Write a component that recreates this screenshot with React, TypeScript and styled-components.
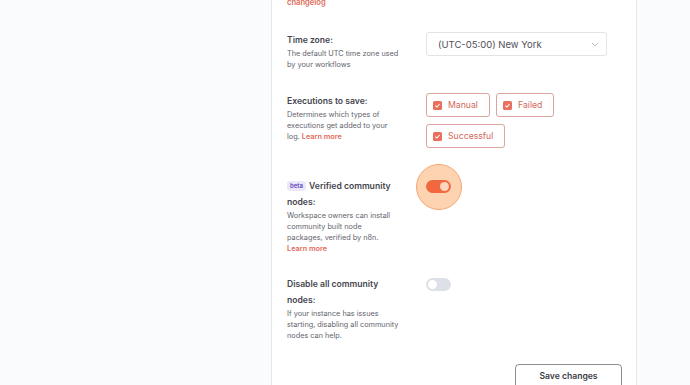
import React from "react";
import styled, { createGlobalStyle } from "styled-components";

const Global = createGlobalStyle`
  html, body { margin: 0; padding: 0; }
  body {
    font-family: Inter, "Open Sans", "Liberation Sans", sans-serif;
    background: #fafbfc;
    -webkit-font-smoothing: antialiased;
  }
`;

const Page = styled.div`
  display: flex;
  width: 690px;
  height: 385px;
  overflow: hidden;
  background: #fafbfc;
`;

const Side = styled.div`
  width: 271px;
  flex: none;
`;

const Panel = styled.div`
  flex: none;
  background: #ffffff;
  border-left: 1px solid #e6e7eb;
  border-right: 1px solid #e6e7eb;
  padding: 0 14px 0 15px;
  box-sizing: border-box;
  width: 366px;
  display: flex;
  flex-direction: column;
`;

const TopLink = styled.a`
  display: block;
  margin-top: -3px;
  font-size: 7.6px;
  font-weight: 600;
  line-height: 12px;
  color: #de6a58;
  text-decoration: none;
`;

const Row = styled.div<{ $top: number }>`
  display: grid;
  grid-template-columns: 139px 1fr;
  margin-top: ${(p) => p.$top}px;
`;

const Label = styled.div<{ $w: number }>`
  max-width: ${(p) => p.$w}px;
`;

const Title = styled.div`
  font-size: 8.6px;
  font-weight: 600;
  line-height: 16px;
  color: #45454d;
`;

const Desc = styled.div`
  font-size: 7.3px;
  line-height: 11px;
  color: #64646c;
`;

const Link = styled.a`
  color: #de6a58;
  font-weight: 600;
  text-decoration: none;
`;

const Badge = styled.span`
  display: inline-block;
  background: #ece8fa;
  color: #6b55c7;
  font-size: 6px;
  font-weight: 700;
  line-height: 10px;
  padding: 0 3px;
  border-radius: 3px;
  margin-right: 3px;
  vertical-align: 1px;
`;

const Select = styled.div`
  width: 181px;
  height: 24px;
  box-sizing: border-box;
  border: 1px solid #e3e4e8;
  border-radius: 3px;
  display: flex;
  align-items: center;
  justify-content: space-between;
  padding: 0 7px 0 11px;
  font-size: 9.5px;
  color: #505058;
`;

const Options = styled.div`
  display: flex;
  flex-wrap: wrap;
  gap: 7px 6px;
  width: 140px;
  align-content: flex-start;
`;

const Option = styled.label`
  display: flex;
  align-items: center;
  gap: 6px;
  height: 24px;
  box-sizing: border-box;
  padding: 0 11px 0 6px;
  border: 1px solid #dca59d;
  border-radius: 3px;
  font-size: 8.7px;
  color: #d4675a;
`;

const Check = styled.span`
  width: 9px;
  height: 9px;
  border-radius: 1.5px;
  background: #e9705f;
  display: flex;
  align-items: center;
  justify-content: center;
`;

const ToggleWrap = styled.div`
  position: relative;
  width: 25px;
  height: 13px;
  margin-top: 2px;
`;

const Halo = styled.div`
  position: absolute;
  left: 50%;
  top: 50%;
  width: 44px;
  height: 44px;
  transform: translate(-50%, -50%);
  border-radius: 50%;
  background: #fdd3b2;
  border: 1.5px solid #f4a66f;
`;

const Toggle = styled.div<{ $on: boolean }>`
  position: relative;
  width: 25px;
  height: 13px;
  border-radius: 7px;
  background: ${(p) => (p.$on ? "#f2683e" : "#dde0e6")};
  &::after {
    content: "";
    position: absolute;
    top: 2px;
    left: ${(p) => (p.$on ? "14px" : "2px")};
    width: 9px;
    height: 9px;
    border-radius: 50%;
    background: ${(p) => (p.$on ? "#fcd6bf" : "#ffffff")};
  }
`;

const Footer = styled.div`
  display: flex;
  justify-content: flex-end;
  margin-top: 23px;
`;

const Button = styled.button`
  width: 107px;
  height: 26px;
  background: #fff;
  border: 1px solid #8c8c92;
  border-radius: 4px;
  font-family: inherit;
  font-size: 8.6px;
  font-weight: 600;
  color: #3c3c44;
  padding: 0 0 3px;
`;

const Chevron = () => (
  <svg width="8" height="5" viewBox="0 0 8 5" fill="none">
    <path d="M0.8 0.8 L4 4 L7.2 0.8" stroke="#b4b5bb" strokeWidth="0.9" />
  </svg>
);

const Tick = () => (
  <svg width="7" height="7" viewBox="0 0 7 7" fill="none">
    <path d="M1.4 3.6 L2.9 5 L5.6 2" stroke="#fff" strokeWidth="1.1" />
  </svg>
);

export default function App() {
  return (
    <Page>
      <Global />
      <Side />
      <Panel>
        <TopLink>changelog</TopLink>
        <Row $top={23}>
          <Label $w={118}>
            <Title>Time zone:</Title>
            <Desc>The default UTC time zone used by your workflows</Desc>
          </Label>
          <Select>
            <span>(UTC-05:00) New York</span>
            <Chevron />
          </Select>
        </Row>
        <Row $top={23}>
          <Label $w={114}>
            <Title>Executions to save:</Title>
            <Desc>
              Determines which types of executions get added to your log.{" "}
              <Link>Learn more</Link>
            </Desc>
          </Label>
          <Options>
            <Option>
              <Check><Tick /></Check>Manual
            </Option>
            <Option>
              <Check><Tick /></Check>Failed
            </Option>
            <Option>
              <Check><Tick /></Check>Successful
            </Option>
          </Options>
        </Row>
        <Row $top={30}>
          <Label $w={108}>
            <Title>
              <Badge>beta</Badge>Verified community nodes:
            </Title>
            <Desc>
              Workspace owners can install community built node packages,
              verified by n8n. <Link>Learn more</Link>
            </Desc>
          </Label>
          <ToggleWrap>
            <Halo />
            <Toggle $on />
          </ToggleWrap>
        </Row>
        <Row $top={22}>
          <Label $w={116}>
            <Title>Disable all community nodes:</Title>
            <Desc>
              If your instance has issues starting, disabling all community
              nodes can help.
            </Desc>
          </Label>
          <ToggleWrap>
            <Toggle $on={false} />
          </ToggleWrap>
        </Row>
        <Footer>
          <Button>Save changes</Button>
        </Footer>
      </Panel>
    </Page>
  );
}
